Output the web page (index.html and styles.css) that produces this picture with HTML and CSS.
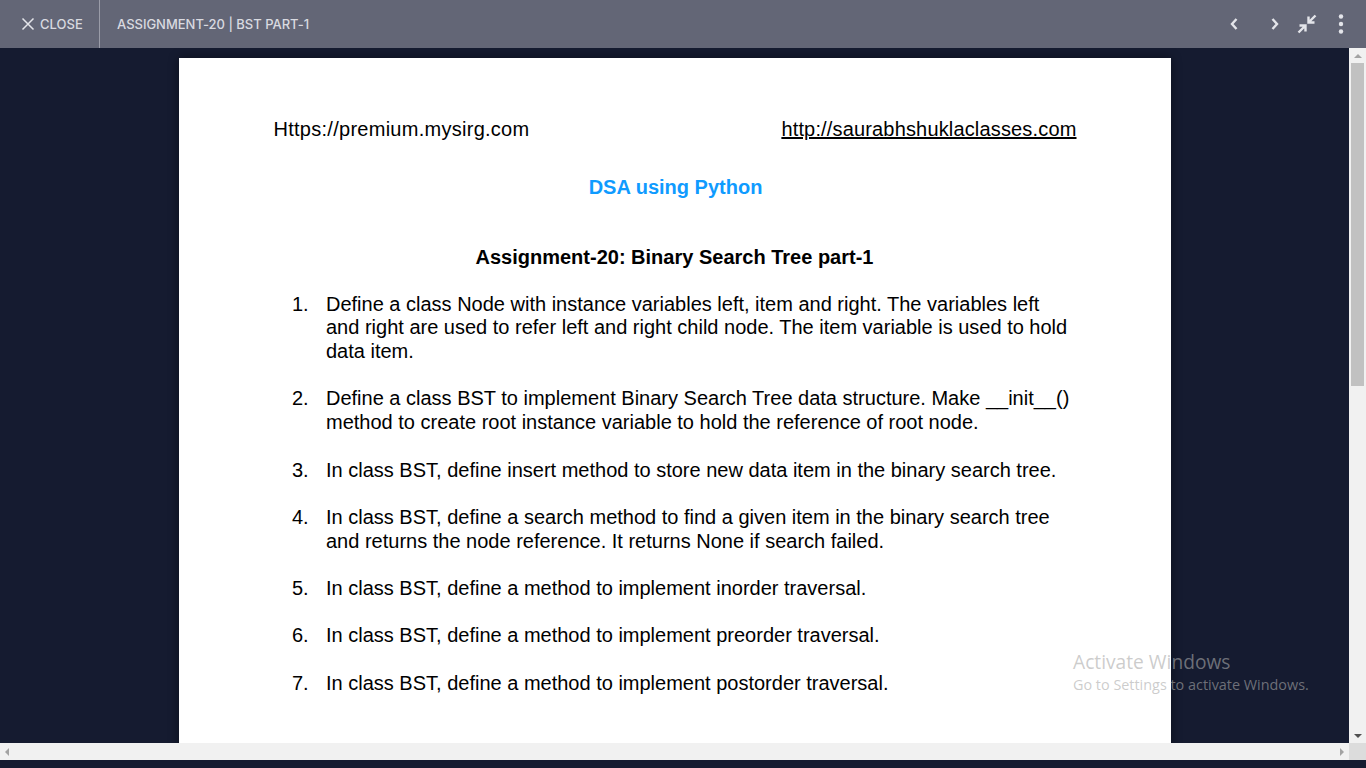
FILE: index.html

```html
<!DOCTYPE html>
<html lang="en">
<head>
    <meta charset="UTF-8">
    <meta name="viewport" content="width=device-width, initial-scale=1.0">
    <title>Assignment-20 | BST Part-1</title>
    <link rel="stylesheet" href="styles.css">
</head>
<body>

    <div class="topbar">
        <div class="close-btn">
            <svg class="close-icon" width="14" height="14" viewBox="0 0 14 14"><path d="M1.5 1.5L12.5 12.5M12.5 1.5L1.5 12.5"/></svg>
            <span>CLOSE</span>
        </div>
        <div class="doc-title">ASSIGNMENT-20 | BST PART-1</div>
        <div class="top-actions">
            <svg class="nav-icon" width="10" height="14" viewBox="0 0 10 14"><path d="M7.5 2L3 7L7.5 12"/></svg>
            <svg class="nav-icon next" width="10" height="14" viewBox="0 0 10 14"><path d="M2.5 2L7 7L2.5 12"/></svg>
            <svg class="shrink-icon" width="20" height="20" viewBox="0 0 20 20"><path d="M18.5 1.5L12.5 7.5M11.5 2.5V8.5H17.5M1.5 18.5L7.5 12.5M2.5 11.5H8.5V17.5"/></svg>
            <svg class="more-icon" width="6" height="20" viewBox="0 0 6 20"><circle cx="3" cy="2.5" r="2.2"/><circle cx="3" cy="10" r="2.2"/><circle cx="3" cy="17.5" r="2.2"/></svg>
        </div>
    </div>

    <div class="viewer">
        <div class="viewer-main">
            <div class="doc-area">
                <div class="page">
                    <div class="page-head">
                        <span class="site-text">Https://premium.mysirg.com</span>
                        <a class="site-link">http://saurabhshuklaclasses.com</a>
                    </div>
                    <h1 class="course">DSA using Python</h1>
                    <h2 class="assignment">Assignment-20: Binary Search Tree part-1</h2>
                    <ol class="tasks">
                        <li><span class="num">1.</span><span>Define a class Node with instance variables left, item and right. The variables left and right are used to refer left and right child node. The item variable is used to hold data item.</span></li>
                        <li><span class="num">2.</span><span>Define a class BST to implement Binary Search Tree data structure. Make __init__() method to create root instance variable to hold the reference of root node.</span></li>
                        <li><span class="num">3.</span><span>In class BST, define insert method to store new data item in the binary search tree.</span></li>
                        <li><span class="num">4.</span><span>In class BST, define a search method to find a given item in the binary search tree and returns the node reference. It returns None if search failed.</span></li>
                        <li><span class="num">5.</span><span>In class BST, define a method to implement inorder traversal.</span></li>
                        <li><span class="num">6.</span><span>In class BST, define a method to implement preorder traversal.</span></li>
                        <li><span class="num">7.</span><span>In class BST, define a method to implement postorder traversal.</span></li>
                    </ol>
                </div>
            </div>
            <div class="hscroll">
                <span class="arrow arrow-left"></span>
                <span class="arrow arrow-right"></span>
            </div>
        </div>
        <div class="vscroll">
            <span class="arrow arrow-up"></span>
            <div class="vthumb"></div>
            <span class="arrow arrow-down"></span>
            <div class="corner"></div>
        </div>
    </div>

    <div class="activate">
        <div class="activate-title">Activate Windows</div>
        <div class="activate-sub">Go to Settings to activate Windows.</div>
    </div>

</body>
</html>
```

FILE: styles.css

```css
html, body { margin: 0; height: 100%; overflow: hidden; }
body { background: #151b30; font-family: "Liberation Sans", Arial, sans-serif; }

.topbar { height: 48px; background: #636676; color: #d9dae0; display: flex; align-items: center; font-family: Inter, sans-serif; font-size: 13px; font-weight: 500; }
.close-btn { width: 100px; height: 48px; box-sizing: border-box; padding-left: 21px; display: flex; align-items: center; gap: 5px; border-right: 1px solid #9a9ca8; }
.close-icon path { stroke: #e4e5ea; stroke-width: 1.5; fill: none; }
.doc-title { margin-left: 17px; letter-spacing: -0.02px; }
.top-actions { margin-left: auto; display: flex; align-items: center; padding-right: 22px; }
.nav-icon path { stroke: #e4e5ea; stroke-width: 2.4; fill: none; }
.nav-icon.next { margin-left: 31px; }
.shrink-icon { margin-left: 17px; }
.shrink-icon path { stroke: #e4e5ea; stroke-width: 2.4; fill: none; }
.more-icon { margin-left: 21px; }
.more-icon circle { fill: #e4e5ea; }

.viewer { height: 712px; display: flex; }
.viewer-main { flex: 1; display: flex; flex-direction: column; min-width: 0; }
.doc-area { flex: 1; overflow: hidden; padding-top: 10px; }

.page { width: 992px; height: 900px; margin: 0 auto; box-sizing: border-box; background: #fff; color: #000; padding: 60px 95px 0; box-shadow: 0 0 10px rgba(0, 0, 0, 0.45); font-size: 20px; line-height: 23.75px; }
.page-head { display: flex; justify-content: space-between; }
.site-text { letter-spacing: 0.27px; }
.site-link { text-decoration: underline; letter-spacing: 0.16px; margin-right: -1px; }
.course { margin: 34px 0 0; padding-left: 2px; text-align: center; font-size: 20px; line-height: 23.75px; color: #0f9bff; }
.assignment { margin: 46px 0 0; text-align: center; font-size: 20px; line-height: 23.75px; }
.tasks { list-style: none; margin: 23.4px 0 0; padding: 0 0 0 18.5px; }
.tasks li { display: flex; margin-bottom: 23.7px; line-height: 23.7px; }
.num { flex: 0 0 34px; }

.hscroll { height: 17px; background: #f1f1f1; display: flex; align-items: center; justify-content: space-between; padding: 0 5px; }
.vscroll { width: 17px; background: #f1f1f1; display: flex; flex-direction: column; align-items: center; }
.vthumb { width: 13px; height: 323px; margin-top: 5px; background: #c1c1c1; }
.corner { width: 17px; height: 17px; background: #dcdcdc; }

.arrow { display: block; width: 0; height: 0; border: 4px solid transparent; }
.arrow-left { border-right-color: #a3a3a3; border-left-width: 0; }
.arrow-right { border-left-color: #a3a3a3; border-right-width: 0; }
.arrow-up { border-bottom-color: #a3a3a3; border-top-width: 0; margin-top: 6px; }
.arrow-down { border-top-color: #505050; border-bottom-width: 0; margin-top: auto; margin-bottom: 5px; }

.activate { position: absolute; left: 1073px; top: 649px; color: rgba(170, 170, 170, 0.6); font-family: "Open Sans", sans-serif; }
.activate-title { font-size: 19.2px; line-height: 26px; }
.activate-sub { font-size: 14.4px; line-height: 20px; }
```
